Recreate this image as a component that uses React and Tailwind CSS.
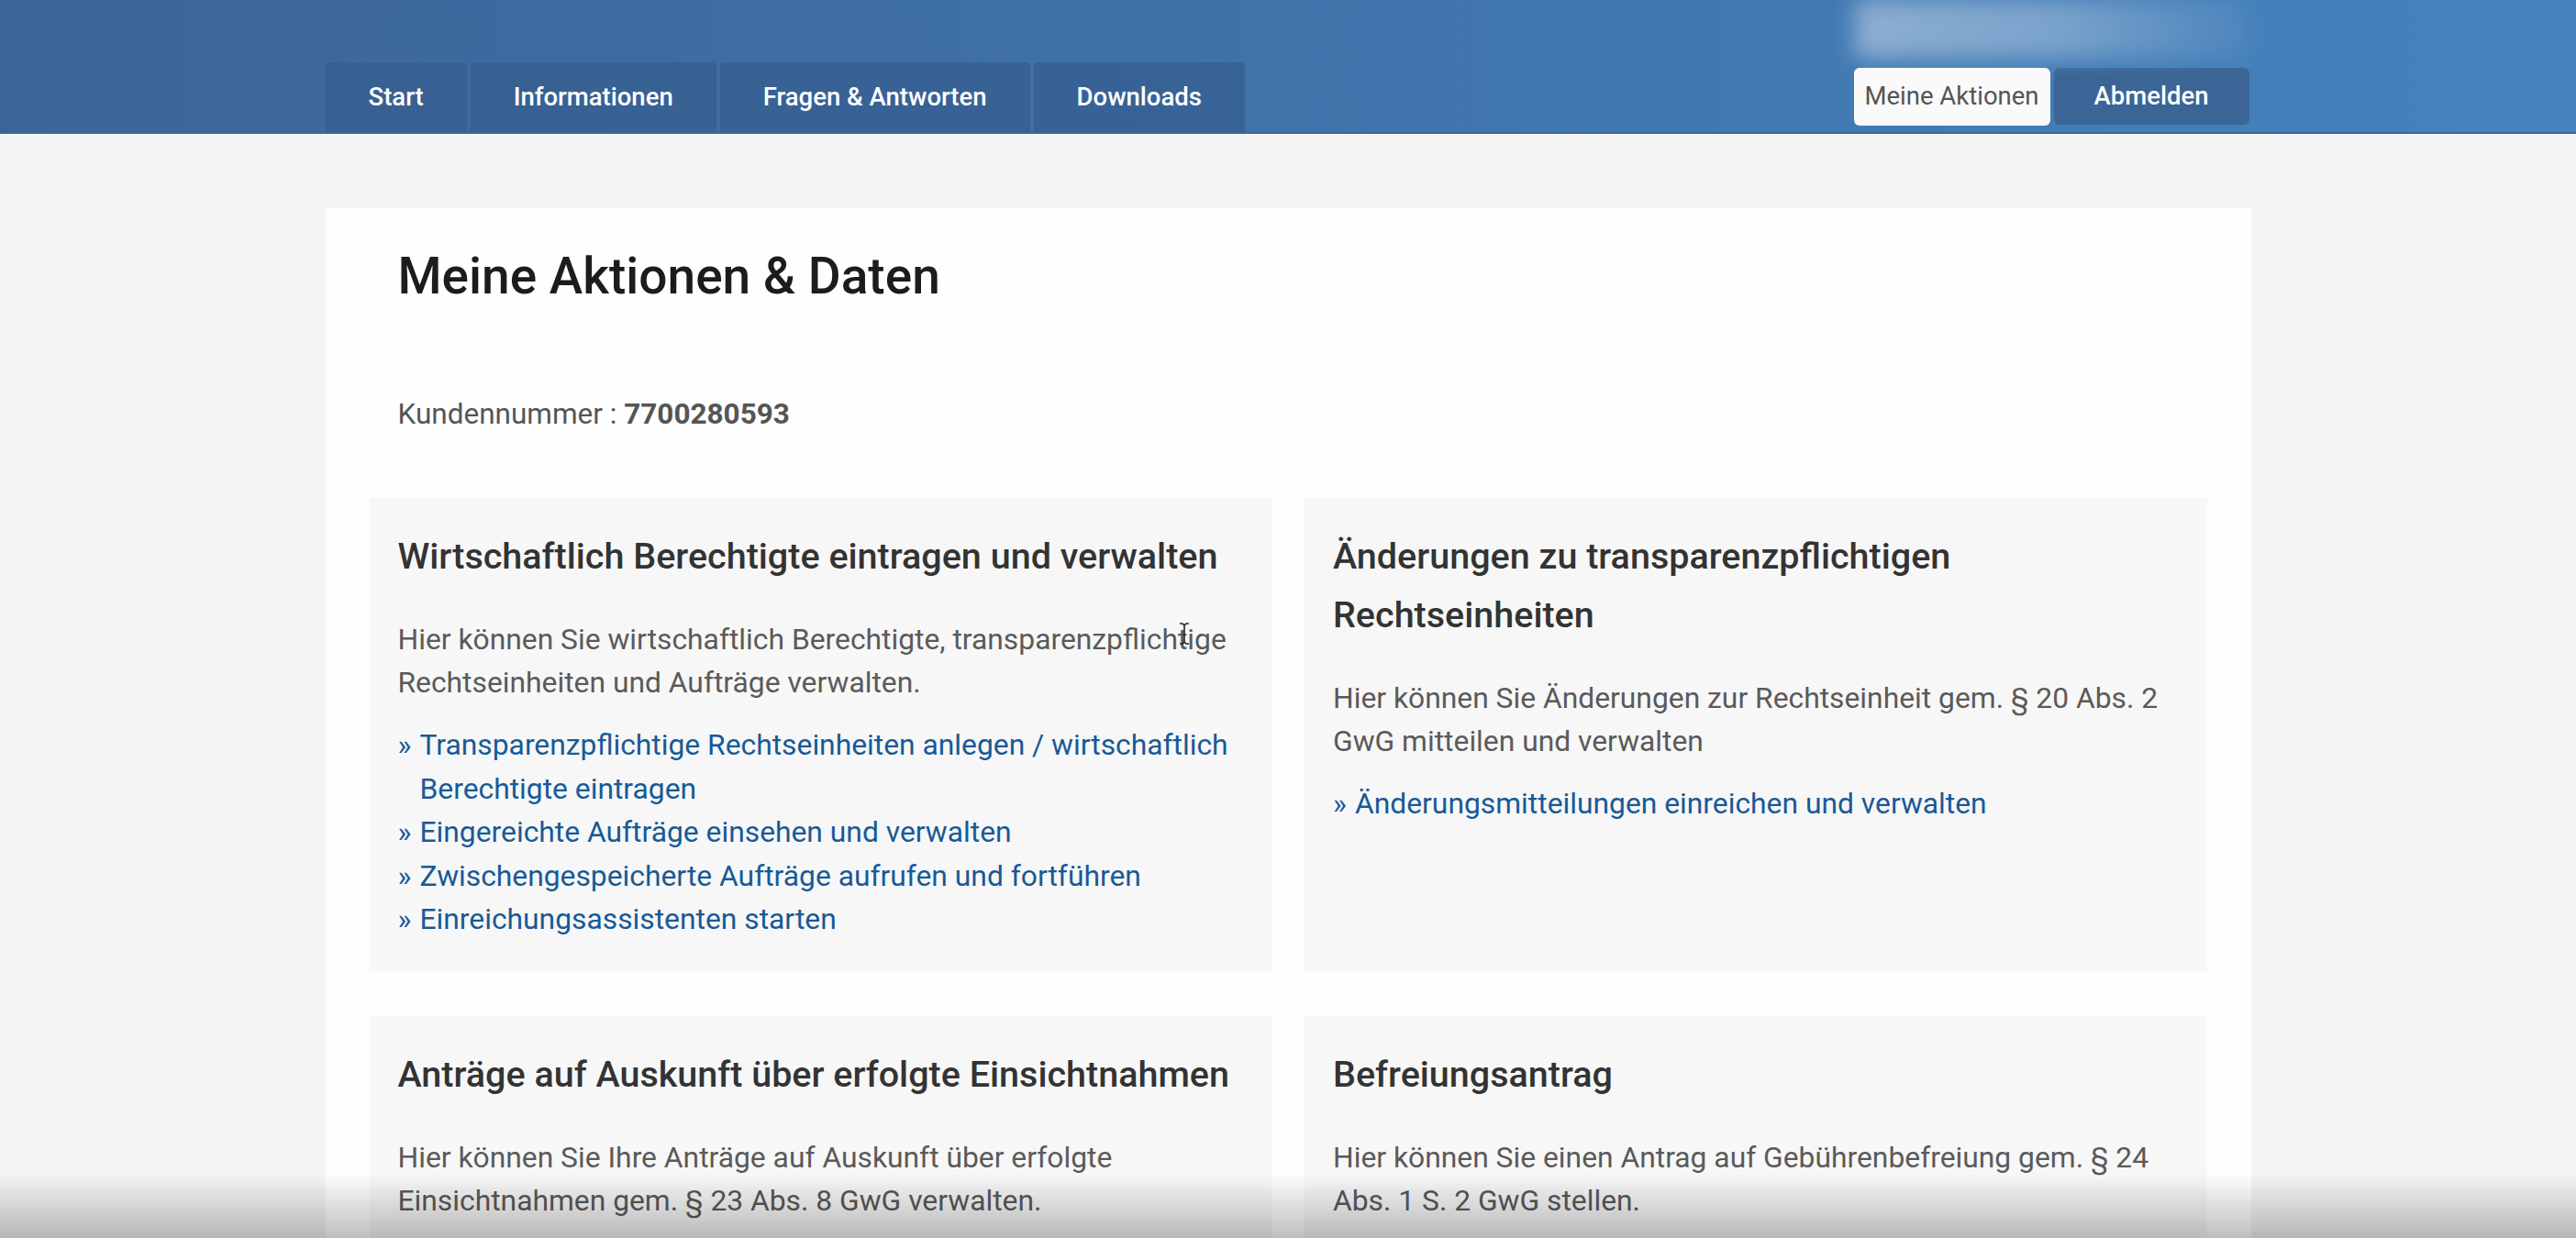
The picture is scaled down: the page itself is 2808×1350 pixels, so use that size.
import React from "react";

const navItems = ["Start", "Informationen", "Fragen & Antworten", "Downloads"];

function Card({ title, text, links = [] }) {
  return (
    <div className="bg-[#f7f7f7] px-[31px] pt-[32px] pb-[32px]">
      <h2 className="text-[39.5px] leading-[64px] font-medium text-[#333333]">{title}</h2>
      <p className="mt-[35px] text-[31.8px] leading-[47px] text-[#5a5a5a]">{text}</p>
      {links.length > 0 && (
        <ul className="mt-[21px]">
          {links.map((link) => (
            <li key={link} className="flex text-[31.8px] leading-[47.5px] text-[#175a97]">
              <span className="w-[24px] shrink-0">»</span>
              <a href="#" className="hover:underline">
                {link}
              </a>
            </li>
          ))}
        </ul>
      )}
    </div>
  );
}

export default function App() {
  return (
    <div className="min-h-screen bg-[#f4f4f4] font-['Roboto','Liberation_Sans',sans-serif]">
      {/* Header */}
      <header className="h-[146px] bg-gradient-to-r from-[#3c6597] via-[#3f73aa] to-[#4583bf] border-b-2 border-[#3a6898]">
        <div className="w-[2099px] mx-auto h-full flex flex-col">
          <div className="h-[68px] flex justify-end">
            <div className="w-[432px] h-[64px] bg-gradient-to-r from-white/40 via-white/30 to-white/5 blur-md rounded" />
          </div>
          <div className="flex-1 flex items-stretch justify-between">
            <nav className="flex gap-[4px]">
              {navItems.map((item) => (
                <a
                  key={item}
                  href="#"
                  className="flex items-center px-[47px] rounded-t-[4px] bg-[#365d8e]/70 text-white text-[27.5px] font-medium"
                >
                  {item}
                </a>
              ))}
            </nav>
            <div className="flex items-center gap-[4px] pb-[2px] pr-[2px]">
              <a
                href="#"
                className="w-[214px] h-[63px] flex items-center justify-center rounded-[6px] bg-[#fafafa] text-[#555555] text-[27.5px]"
              >
                Meine Aktionen
              </a>
              <a
                href="#"
                className="w-[213px] h-[62px] flex items-center justify-center rounded-[6px] bg-[#3a6596] text-white text-[27.5px] font-medium"
              >
                Abmelden
              </a>
            </div>
          </div>
        </div>
      </header>

      {/* Content */}
      <main className="w-[2099px] mx-auto mt-[81px] bg-[#fefefe] pb-[60px]">
        <div className="px-[79px] pt-[42px]">
          <h1 className="text-[55px] leading-[65px] font-medium text-[#1c1c1c]">Meine Aktionen &amp; Daten</h1>
          <p className="mt-[94px] text-[31.5px] leading-[47px] text-[#555555]">
            Kundennummer : <span className="font-bold">7700280593</span>
          </p>
        </div>

        <div className="relative px-[48px] mt-[68px] grid grid-cols-2 gap-x-[36px] gap-y-[49px]">
          <Card
            title="Wirtschaftlich Berechtigte eintragen und verwalten"
            text="Hier können Sie wirtschaftlich Berechtigte, transparenzpflichtige Rechtseinheiten und Aufträge verwalten."
            links={[
              "Transparenzpflichtige Rechtseinheiten anlegen / wirtschaftlich Berechtigte eintragen",
              "Eingereichte Aufträge einsehen und verwalten",
              "Zwischengespeicherte Aufträge aufrufen und fortführen",
              "Einreichungsassistenten starten",
            ]}
          />
          <Card
            title="Änderungen zu transparenzpflichtigen Rechtseinheiten"
            text="Hier können Sie Änderungen zur Rechtseinheit gem. § 20 Abs. 2 GwG mitteilen und verwalten"
            links={["Änderungsmitteilungen einreichen und verwalten"]}
          />
          <Card
            title="Anträge auf Auskunft über erfolgte Einsichtnahmen"
            text="Hier können Sie Ihre Anträge auf Auskunft über erfolgte Einsichtnahmen gem. § 23 Abs. 8 GwG verwalten."
          />
          <Card
            title="Befreiungsantrag"
            text="Hier können Sie einen Antrag auf Gebührenbefreiung gem. § 24 Abs. 1 S. 2 GwG stellen."
          />

          {/* text cursor */}
          <svg
            className="absolute left-[930px] top-[136px] pointer-events-none"
            width="12"
            height="24"
            viewBox="0 0 12 24"
          >
            <path d="M1 1h3l2 2 2-2h3M6 3v18M1 23h3l2-2 2 2h3" fill="none" stroke="#222" strokeWidth="1.6" />
          </svg>
        </div>
      </main>

      {/* bottom shadow */}
      <div className="fixed inset-x-0 bottom-0 h-[70px] bg-gradient-to-t from-black/25 to-transparent pointer-events-none" />
    </div>
  );
}
